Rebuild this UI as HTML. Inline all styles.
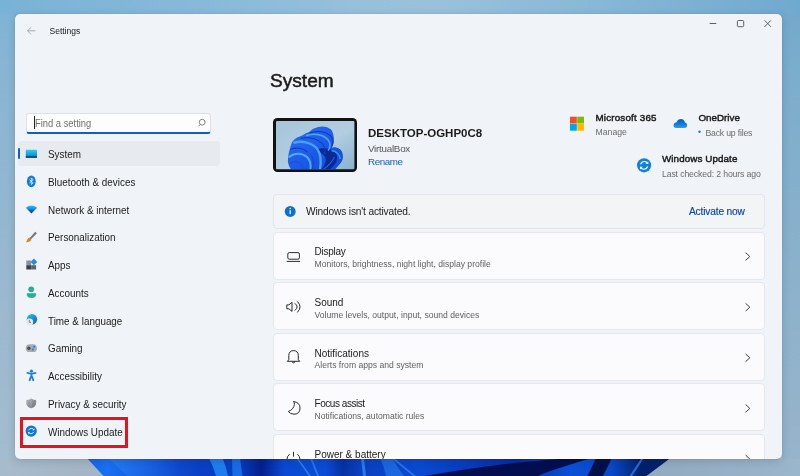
<!DOCTYPE html>
<html><head><meta charset="utf-8">
<style>
*{margin:0;padding:0;box-sizing:border-box}
html,body{width:800px;height:476px;overflow:hidden}
body{position:relative;font-family:"Liberation Sans",sans-serif;background:linear-gradient(180deg,#76aed3 0%,#84b4d5 40%,#93b9d5 75%,#a4bed2 100%)}
.a{position:absolute;white-space:nowrap;line-height:1}
svg.a{overflow:visible}
#win{position:absolute;left:15px;top:14px;width:767px;height:445px;border-radius:5px;background:#f0f3f7;overflow:hidden;box-shadow:0 0 1px rgba(0,0,0,.25),0 2px 9px rgba(0,25,50,.16)}
#c{position:absolute;left:-15px;top:-14px;width:800px;height:476px;will-change:transform}
.t{color:#1b1b1b}
.side{font-size:10.7px;color:#1b1b1b;transform:scaleX(.925);transform-origin:0 0}
.card{position:absolute;left:273px;width:491.8px;height:48px;background:#fbfbfd;border:1px solid #e5e7eb;border-radius:4px}
.ct{font-size:10px;color:#1b1b1b}
.cs{font-size:8.6px;color:#5f5f5f}
.chev{position:absolute;left:745px;width:6px;height:8px}
</style></head>
<body>
<div class="a" style="left:0;top:0;width:800px;height:14px;background:linear-gradient(90deg,#79b2d7 0%,#88b9da 25%,#97c0db 45%,#99c1db 55%,#88b7d7 75%,#70a9cf 100%)"></div>
<div class="a" style="left:0;top:14px;width:15px;height:462px;background:linear-gradient(180deg,#7fb4d6 0%,#88b5d2 12%,#9cb9cf 66%,#a4bccf 100%)"></div>
<div class="a" style="left:782px;top:14px;width:18px;height:462px;background:linear-gradient(180deg,#74a9cc 0%,#7badcc 12%,#8fb2cb 66%,#97b4cb 100%)"></div>
<div class="a" style="left:0;top:459px;width:800px;height:17px;background:linear-gradient(90deg,#a6bbcc 0%,#a4b6c6 10%,#8aa8c6 50%,#93acc2 85%,#9ab6cd 100%)"></div>
<!-- wallpaper bloom -->
<svg class="a" style="left:0;top:458px" width="800" height="18" viewBox="0 458 800 18">
  <defs>
    <linearGradient id="bl" gradientUnits="userSpaceOnUse" x1="86" y1="0" x2="670" y2="0">
      <stop offset="0" stop-color="#1262ea"/>
      <stop offset="0.036" stop-color="#1a70f0"/>
      <stop offset="0.16" stop-color="#0a40c8"/>
      <stop offset="0.26" stop-color="#0a3ec0"/>
      <stop offset="0.30" stop-color="#041f8c"/>
      <stop offset="0.34" stop-color="#0a4ad2"/>
      <stop offset="0.41" stop-color="#0a4cd4"/>
      <stop offset="0.44" stop-color="#0632a2"/>
      <stop offset="0.47" stop-color="#0a40c0"/>
      <stop offset="0.57" stop-color="#0a4ad0"/>
      <stop offset="0.675" stop-color="#0838b8"/>
      <stop offset="0.74" stop-color="#062ca0"/>
      <stop offset="0.83" stop-color="#0a50d8"/>
      <stop offset="0.9" stop-color="#0a48c8"/>
      <stop offset="0.95" stop-color="#04206a"/>
      <stop offset="1" stop-color="#04206a"/>
    </linearGradient>
  </defs>
  <path d="M86.9 458 L670.5 458 L646.5 476 L103.5 476 Z" fill="url(#bl)"/>
  <linearGradient id="ov1" gradientUnits="userSpaceOnUse" x1="108" y1="0" x2="200" y2="0"><stop offset="0" stop-color="#2a80f4" stop-opacity=".55"/><stop offset="1" stop-color="#2a80f4" stop-opacity="0"/></linearGradient><path d="M108 458 L200 458 L200 476 L127.5 476 Z" fill="url(#ov1)"/>
  <path d="M209 458 L222.5 458 Q226 466 228 476 L216 476 Q213 466 209 458 Z" fill="#2288f6" opacity=".85"/>
  <path d="M232 458 L240 458 L242.5 476 L232.5 476 Z" fill="#1a78ee" opacity=".8"/>
  <path d="M296 458 L298 458 L311 476 L309 476 Z" fill="#3a90f8" opacity=".7"/>
  <path d="M310 458 L312 458 L319 476 L317 476 Z" fill="#3a90f8" opacity=".6"/>
  <path d="M361 458 L364 458 L366 476 L363 476 Z" fill="#3a90f8" opacity=".7"/>
  <path d="M391 458 L394 458 L416 476 L413 476 Z" fill="#3a90f8" opacity=".6"/>
  
  
  
  <path d="M425 476 C470 468 520 461 575 458 L592 458 C565 466 548 471 538 476 Z" fill="#020e50"/>
  <path d="M380 458 L392 458 Q398 468 404 476 L386 476 Q384 466 380 458Z" fill="#2a7cf2" opacity=".6"/>
  <path d="M596 458 L612 458 L603 476 L587.5 476 Z" fill="#02104a"/>
  <path d="M641.5 458 L644 458 L632 476 L629.5 476 Z" fill="#2a80f0" opacity=".8"/>
</svg>

<div id="win"><div id="c">
  <!-- title bar -->
  <svg class="a" style="left:0;top:0" width="800" height="40" viewBox="0 0 800 40">
    <path d="M27.5 30.8H35.5M27.5 30.8L31 27.3M27.5 30.8L31 34.3" stroke="#a3a3a3" stroke-width="0.9" fill="none"/>
    <path d="M709.7 23.5H716.3" stroke="#444" stroke-width="0.85"/>
    <rect x="737.4" y="20.5" width="6.3" height="6.2" rx="1.1" stroke="#444" stroke-width="0.85" fill="none"/>
    <path d="M764.5 20.3L771 26.9M771 20.3L764.5 26.9" stroke="#444" stroke-width="0.8"/>
  </svg>
  <span class="a t" style="left:49.5px;top:27px;font-size:8.5px">Settings</span>

  <!-- search -->
  <div class="a" style="left:26.3px;top:112.5px;width:185.2px;height:21.3px;background:#fdfdfd;border:1px solid #dde0e4;border-bottom:2px solid #0e5fc4;border-radius:3px"></div>
  <div class="a" style="left:33.6px;top:116px;width:1.2px;height:13px;background:#222"></div>
  <span class="a" style="left:35.3px;top:117.7px;font-size:10.6px;color:#707070;transform:scaleX(.885);transform-origin:0 0">Find a setting</span>
  <svg class="a" style="left:0;top:0" width="800" height="476" viewBox="0 0 800 476">
    <circle cx="202.2" cy="122.2" r="2.9" stroke="#777" stroke-width="0.9" fill="none"/><path d="M200.2 124.3L198.4 126.3" stroke="#777" stroke-width="0.9"/>
  </svg>

  <!-- sidebar -->
  <div class="a" style="left:17.5px;top:141.2px;width:202px;height:24.4px;background:#e7eaee;border-radius:4px"></div>
  <div class="a" style="left:17.6px;top:148px;width:2.2px;height:11px;background:#1061c4;border-radius:1px"></div>

  <svg class="a" style="left:0;top:0" width="800" height="476" viewBox="0 0 800 476">
    <defs>
      <linearGradient id="sys" x1="0" y1="0" x2="0" y2="1"><stop offset="0" stop-color="#2ad0ee"/><stop offset="1" stop-color="#0a78c8"/></linearGradient>
      <linearGradient id="wifi" x1="0" y1="0" x2="0" y2="1"><stop offset="0" stop-color="#2fc0f5"/><stop offset=".45" stop-color="#1490e0"/><stop offset=".6" stop-color="#0f5fc0"/><stop offset="1" stop-color="#0a3fa0"/></linearGradient>
      <linearGradient id="brush" x1="0" y1="1" x2="1" y2="0"><stop offset="0" stop-color="#f25c0c"/><stop offset=".3" stop-color="#ff9a00"/><stop offset=".36" stop-color="#7a8088"/><stop offset="1" stop-color="#5a6068"/></linearGradient>
      <linearGradient id="glob" x1="0" y1="0" x2="1" y2="1"><stop offset="0" stop-color="#29c4e8"/><stop offset="1" stop-color="#0a5fc8"/></linearGradient>
      <linearGradient id="shld" x1="0" y1="0" x2="1" y2="1"><stop offset="0" stop-color="#b4b8be"/><stop offset="1" stop-color="#6a6e76"/></linearGradient>
      <linearGradient id="od" x1="0" y1="0" x2="0" y2="1"><stop offset="0" stop-color="#0f5fc0"/><stop offset=".5" stop-color="#0c78d8"/><stop offset="1" stop-color="#27a3ea"/></linearGradient>
    </defs>
    <!-- System -->
    <rect x="25.8" y="149.8" width="11.2" height="8" rx="0.8" fill="url(#sys)"/>
    <rect x="25.8" y="156.3" width="11.2" height="1.5" fill="#0b3f78"/>
    <!-- Bluetooth -->
    <ellipse cx="31.3" cy="181.3" rx="4.4" ry="5.9" fill="#0a7af0"/>
    <path d="M29.4 179.6L33.2 182.9L31.3 184.6V178L33.2 179.7L29.4 183" stroke="#fff" stroke-width="0.75" fill="none" stroke-linejoin="round"/>
    <!-- WiFi -->
    <path d="M25.8 207.8Q31.4 203.2 37.1 207.8L31.45 213.4Z" fill="url(#wifi)"/>
    <!-- Brush -->
    <path d="M35.2 231.8L36.9 233.3L30.8 239.6L29.5 238.3Z" fill="#6f757d"/>
    <path d="M29.6 237.6Q27.9 237.8 27.2 239.8Q26.9 241.4 25.8 242.2Q29 242.6 30.6 240.8Q31.5 239.6 30.9 238.8Z" fill="#f77a0c"/>
    <!-- Apps -->
    <rect x="26.3" y="260.5" width="4.9" height="4.7" fill="#8b9096"/>
    <rect x="26.3" y="265.2" width="4.9" height="4.3" fill="#3c4046"/>
    <rect x="31.2" y="265.2" width="4.9" height="4.3" fill="#5e636a"/>
    <path d="M33.9 258.6L37.2 261.9L33.9 265.2L30.6 261.9Z" fill="#1b8ef0"/>
    <!-- Accounts -->
    <circle cx="31.2" cy="289.3" r="2.9" fill="#1db394"/>
    <path d="M26.8 293.2H36.1V294.3Q36.1 297.9 31.45 297.9Q26.8 297.9 26.8 294.3Z" fill="#1db394"/>
    <!-- Time -->
    <circle cx="31.95" cy="319.3" r="5.2" fill="url(#glob)"/>
    <circle cx="29.6" cy="322" r="3.6" fill="#e8e8ea"/>
    <path d="M29.3 319.9V322.4H31" stroke="#6a6a6a" stroke-width="0.8" fill="none"/>
    <!-- Gaming -->
    <rect x="25.8" y="344.3" width="11.1" height="7.8" rx="3.9" fill="#a7abb1"/>
    <circle cx="28.9" cy="348.2" r="1.7" fill="#4a4d52"/>
    <rect x="33.2" y="345.8" width="1.8" height="1.8" fill="#1c84e8"/>
    <rect x="31.9" y="348.6" width="1.8" height="1.8" fill="#1c84e8"/>
    <!-- Accessibility -->
    <circle cx="31.45" cy="371.2" r="1.6" fill="#1a80e6"/>
    <path d="M27.4 372.9L31.45 374L35.5 372.9M31.45 373.8V376.3M31.2 376.2L29.6 380.2M31.7 376.2L33.3 380.2" stroke="#1a80e6" stroke-width="1.8" stroke-linecap="round" stroke-linejoin="round" fill="none"/>
    <!-- Privacy -->
    <path d="M31.2 398.6Q33.6 400.1 36.1 400.1V403.2Q36 406.6 31.2 408.3Q26.4 406.6 26.3 403.2V400.1Q28.8 400.1 31.2 398.6Z" fill="url(#shld)"/>
    <path d="M31.2 398.9V408" stroke="#c4c7cc" stroke-width="0.5" opacity=".6"/>
    <!-- WU sidebar -->
    <circle cx="31.2" cy="431.05" r="5.6" fill="#0e76d8"/>
    <path d="M28.6 430.2Q29.6 428.2 31.6 428.4Q33 428.6 33.7 429.6M33.8 431.9Q32.8 433.9 30.8 433.7Q29.4 433.5 28.7 432.5" stroke="#fff" stroke-width="0.9" fill="none"/>
    <path d="M34.3 428.2V430.2H32.4Z M28.1 434V432H30Z" fill="#fff"/>
  </svg>

  <span class="a side" style="left:48px;top:149px">System</span>
  <span class="a side" style="left:48px;top:176.7px">Bluetooth &amp; devices</span>
  <span class="a side" style="left:48px;top:204.5px">Network &amp; internet</span>
  <span class="a side" style="left:48px;top:232.2px">Personalization</span>
  <span class="a side" style="left:48px;top:260px">Apps</span>
  <span class="a side" style="left:48px;top:287.7px">Accounts</span>
  <span class="a side" style="left:48px;top:315.5px">Time &amp; language</span>
  <span class="a side" style="left:48px;top:343.2px">Gaming</span>
  <span class="a side" style="left:48px;top:371px">Accessibility</span>
  <span class="a side" style="left:48px;top:398.7px">Privacy &amp; security</span>
  <span class="a side" style="left:48px;top:426.5px">Windows Update</span>
  <div class="a" style="left:20px;top:417px;width:108px;height:31px;border:3px solid #e8121c"></div>

  <!-- header -->
  <span class="a t" style="left:270px;top:71px;font-size:19.1px;-webkit-text-stroke:0.5px #1b1b1b">System</span>

  <!-- device -->
  <div class="a" style="left:273px;top:118px;width:84px;height:54px;border-radius:4.5px;background:#121212;"></div>
  <svg class="a" style="left:275.8px;top:120.8px" width="78.4" height="48.3" viewBox="0 0 78.4 48.3">
    <defs><linearGradient id="scr" x1="0" y1="0" x2="1" y2="1"><stop offset="0" stop-color="#a6c5db"/><stop offset=".55" stop-color="#b2cde0"/><stop offset="1" stop-color="#8ab1cf"/></linearGradient>
    <clipPath id="sc"><rect x="0" y="0" width="78.4" height="48.3" rx="1"/></clipPath></defs>
    <rect x="0" y="0" width="78.4" height="48.3" rx="1" fill="url(#scr)"/>
    <g clip-path="url(#sc)">
    <defs><linearGradient id="bm" x1="0" y1="0" x2="1" y2="1"><stop offset="0" stop-color="#2a70f4"/><stop offset=".6" stop-color="#1a58e6"/><stop offset="1" stop-color="#1348d0"/></linearGradient></defs>
    <path d="M15 48.3C12.5 45 11.5 41 12 38C12.3 34 13 30 14 27.4C14.8 24.5 15.5 22 16.9 20.1C19 17.5 22 15.8 25.6 14.8C28 13.2 30.5 11.5 33.3 10.9C36 8.5 40 5.8 46.8 5.6C51.5 5.8 55.5 8 56.5 10.9C58 14 58.2 19 57.5 22.5C57 24.5 55.5 26.2 54 27.2C57 26.3 58.5 26.1 60.4 26.4C63.2 27 65.6 29 66.2 31.2C67 34 67.1 36 66.7 38C66 41 64.2 43 62.3 44.7C61 46 60 47.3 59.4 48.3Z" fill="url(#bm)"/>
    <path d="M39 29C45 26.5 52 26.5 57 29.5C61.5 32.5 62 37.5 60 41.5C58.5 44.5 56 46.8 54 48.3H45C48.5 45 50.5 41 49.5 37C48 33 43.5 31 39 29Z" fill="#0a2a92"/>
    <path d="M33.3 12C41 9 51 10.5 55.5 16C58 20 57 24 55 27" stroke="#0e39b0" stroke-width="1.1" fill="none"/>
    <path d="M30 14.8C38 11.8 48 13.3 52.3 19.2C54.8 23 54 27 52 29.5" stroke="#52a6ff" stroke-width="1.5" fill="none"/>
    <path d="M24.5 17.5C33 15.3 42 17.5 47 23.5C49.5 27 49.5 30 48.3 33" stroke="#1040bb" stroke-width="1.1" fill="none"/>
    <path d="M17.5 22C25 19.5 35 21 40.5 27C44.5 32 45.5 40 44 48.3" stroke="#48a0ff" stroke-width="2.4" fill="none"/>
    <path d="M14.5 28.5C20 26 27 27 31.5 31" stroke="#0f40c0" stroke-width="1.1" fill="none"/>
    <path d="M12.5 36.5C18 31.5 26 31.5 31 36C34 39 35 44 34.5 48.3" stroke="#50a8ff" stroke-width="2.1" fill="none"/>
    <path d="M13.5 43C17 39.5 22 39.5 25 43C26.5 45 27 47 27 48.3" stroke="#1a52d4" stroke-width="1.2" fill="none"/>
    <path d="M55.5 29.5C60 30.2 63.8 33.5 64.3 38.2" stroke="#3f8df6" stroke-width="1.4" fill="none"/>
    <path d="M47.5 48.3C52 45 56 41.5 58.5 36" stroke="#2260e0" stroke-width="1.1" fill="none"/>
    <path d="M36 48.3C38 44 38 38 35 34" stroke="#1445c6" stroke-width="1" fill="none"/>
    </g>
  </svg>
  <span class="a t" style="left:368px;top:128px;font-size:11.5px;font-weight:bold">DESKTOP-OGHP0C8</span>
  <span class="a" style="left:368px;top:143.5px;font-size:9.8px;color:#555;letter-spacing:-0.25px">VirtualBox</span>
  <span class="a" style="left:368px;top:156.7px;font-size:9.8px;color:#2260b0;letter-spacing:-0.4px">Rename</span>

  <!-- top right -->
  <svg class="a" style="left:0;top:0" width="800" height="476" viewBox="0 0 800 476">
    <rect x="570" y="116.7" width="6.8" height="6.8" fill="#f25022"/>
    <rect x="577.2" y="116.7" width="6.8" height="6.8" fill="#7fba00"/>
    <rect x="570" y="123.9" width="6.8" height="6.8" fill="#00a4ef"/>
    <rect x="577.2" y="123.9" width="6.8" height="6.8" fill="#ffb900"/>
    <path d="M673.6 126.3Q673.2 122.6 676.6 122.2Q677.8 119.1 681 119.1Q684.2 119.2 685 122.4Q687.4 122.9 687.2 125.6Q687 128.1 684.3 128.1H676Q673.9 128 673.6 126.3Z" fill="url(#od)"/>
    <circle cx="699.5" cy="131.8" r="1.2" fill="#1a78d8"/>
    <circle cx="644.1" cy="165.35" r="7.05" fill="#1380dc"/>
    <path d="M640.6 164.2Q641.6 161.4 644.6 161.5Q646.4 161.7 647.4 163M647.6 166.5Q646.6 169.3 643.6 169.2Q641.8 169 640.8 167.7" stroke="#fff" stroke-width="1.1" fill="none"/>
    <path d="M648.3 161.2V164H645.6Z M640 169.5V166.7H642.7Z" fill="#fff"/>
  </svg>
  <span class="a t" style="left:595.5px;top:112.5px;font-size:9.8px;-webkit-text-stroke:0.45px #1b1b1b;letter-spacing:0.18px">Microsoft 365</span>
  <span class="a" style="left:595.5px;top:128px;font-size:8.7px;color:#6b6b6b">Manage</span>
  <span class="a t" style="left:698.5px;top:112.7px;font-size:9.8px;-webkit-text-stroke:0.45px #1b1b1b">OneDrive</span>
  <span class="a" style="left:705.5px;top:128.5px;font-size:8.7px;color:#6b6b6b;letter-spacing:-0.2px">Back up files</span>
  <span class="a t" style="left:662px;top:154.3px;font-size:9.8px;-webkit-text-stroke:0.45px #1b1b1b;letter-spacing:0.1px">Windows Update</span>
  <span class="a" style="left:662px;top:170px;font-size:8.7px;color:#6b6b6b;letter-spacing:-0.13px">Last checked: 2 hours ago</span>

  <!-- banner -->
  <div class="a" style="left:273px;top:194px;width:491.8px;height:35px;background:#f3f4f6;border:1px solid #e3e5e9;border-radius:4px"></div>
  <svg class="a" style="left:0;top:0" width="800" height="476" viewBox="0 0 800 476">
    <circle cx="290.2" cy="211.45" r="5.45" fill="#0f6fd0"/>
    <rect x="289.6" y="210.2" width="1.2" height="3.9" fill="#fff"/>
    <circle cx="290.2" cy="208.6" r="0.75" fill="#fff"/>
  </svg>
  <span class="a t" style="left:306px;top:206.8px;font-size:10.2px;letter-spacing:-0.17px">Windows isn't activated.</span>
  <span class="a" style="left:689px;top:206.8px;font-size:10.2px;color:#0f47a0;letter-spacing:-0.17px;-webkit-text-stroke:0.15px #0f47a0">Activate now</span>

  <!-- cards -->
  <div class="card" style="top:232px"></div>
  <div class="card" style="top:282px"></div>
  <div class="card" style="top:332.8px"></div>
  <div class="card" style="top:382.8px"></div>
  <div class="card" style="top:433.5px"></div>
  <svg class="a" style="left:0;top:0" width="800" height="476" viewBox="0 0 800 476">
    <g stroke="#333" stroke-width="0.95" fill="none" stroke-linecap="round" stroke-linejoin="round">
      <path d="M745.9 252.9L749.8 256.5L745.9 260.1"/>
      <path d="M745.9 303.6L749.8 307.2L745.9 310.8"/>
      <path d="M745.9 354.2L749.8 357.8L745.9 361.4"/>
      <path d="M745.9 404.8L749.8 408.4L745.9 412"/>
      <path d="M745.9 455.4L749.8 459L745.9 462.6"/>
    </g>
    <g stroke="#1f1f1f" stroke-width="0.95" fill="none" stroke-linejoin="round">
      <rect x="287.8" y="252.6" width="11.6" height="6.6" rx="1.5"/>
      <path d="M286.7 261.4H300"/>
      <path d="M286.8 304.9H288.9L292 302.3V311.4L288.9 308.8H286.8Z"/>
      <path d="M294.8 303.3Q299.4 306.9 294.8 310.5M297.3 301.4Q302.7 306.9 297.3 312.4"/>
      <path d="M288.8 359.8V355.5C288.8 352.2 290.8 350.6 293.55 350.6C296.3 350.6 298.3 352.2 298.3 355.5V359.8L299.8 361.3H287.3Z"/>
      <path d="M292.3 361.6A1.25 1.25 0 0 0 294.8 361.6"/>
      <path d="M293.5 401.5Q300 402.5 300 407.9Q300 414.2 294 414.2Q290.3 414.2 288.3 411.5Q293.8 409.4 294.4 404.4Q294.5 402.6 293.5 401.5Z"/>
      <path d="M293.5 451.8V456.6M289.6 454.2Q287 456.3 287 459.3M297.4 454.2Q300 456.3 300 459.3"/>
    </g>
  </svg>
  <span class="a ct" style="left:314.5px;top:247.4px;letter-spacing:-0.25px">Display</span>
  <span class="a cs" style="left:314.5px;top:260px">Monitors, brightness, night light, display profile</span>
  <span class="a ct" style="left:314.5px;top:298.1px">Sound</span>
  <span class="a cs" style="left:314.5px;top:310.7px">Volume levels, output, input, sound devices</span>
  <span class="a ct" style="left:314.5px;top:348.7px">Notifications</span>
  <span class="a cs" style="left:314.5px;top:361.3px">Alerts from apps and system</span>
  <span class="a ct" style="left:314.5px;top:399.3px;letter-spacing:-0.45px">Focus assist</span>
  <span class="a cs" style="left:314.5px;top:411.9px">Notifications, automatic rules</span>
  <span class="a ct" style="left:314.5px;top:449.8px">Power &amp; battery</span>
</div></div>
</body></html>
